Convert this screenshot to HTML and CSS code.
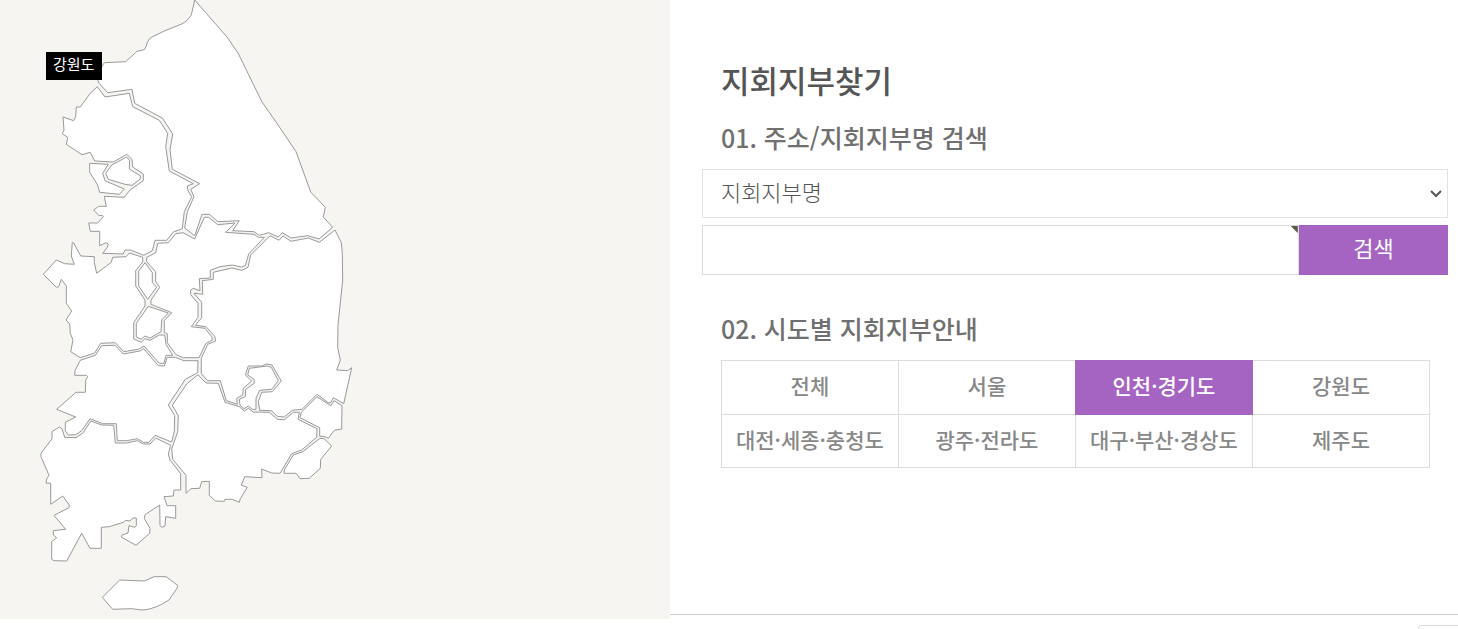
FILE: index.html
```html
<!DOCTYPE html>
<html lang="ko">
<head>
<meta charset="utf-8">
<meta name="viewport" content="width=device-width, initial-scale=1">
<title>지회지부찾기</title>
<link rel="stylesheet" href="styles.css">
</head>
<body>
<main class="page">
  <section class="map-panel" aria-label="지도">
    <svg class="map" viewBox="0 0 360 619" width="360" height="619" role="img" aria-label="대한민국 지도">
      <!-- 강원도 -->
      <path d="M194.7 0L227 37L238 53L262 102L274.7 120L296 151.7L310.7 192L325.3 207.3L323.3 217L332.7 227.3L319 239L307.7 235.7L291 238L282.3 232.7L278.3 237L268.7 232.7L259.3 235.3L254 231.7L232.7 230.7L239.3 220.7L218 221.7L209.3 214.3H202L194.7 235.7L184.7 228L187.3 211.7L194 196.7L190.7 189.3L199.7 183.7L172.3 169.3L170 150L172.7 134L162.3 118L134.7 103.3L132 89.3L107.7 92.7L99 83.3L97 78L102 66.7L104.3 62.7L125.7 61.7L137 51.3L144.3 49.7Q147 46 147 43Q149 38 152 37L165 30.7L181.7 24Q191 19 192 12Z"/>
      <!-- 경기도 -->
      <path d="M97.3 86.7L105 97L129.3 93.3L132.7 106.7L159.3 120.3L167.7 133.3L165.7 146.7L169.3 171L193.3 183.7L187.3 186L188 190.7L191.7 196.7L184.3 211.7L182.3 228.7L173.3 232L166.7 240.3H155L152.3 250.7L143.7 255.3L130.7 250H125L123.3 254L102.7 253.3L107.3 247.3L108.3 244L106 242.7L99.7 245.7V231.3H90.3L88.7 223H97.7L103.3 216.7L102.3 215.3L99 215.7L93.7 210L98.7 206.3H106.3L104.3 196.3L124.3 197.3L130 190L143.3 180.7V174L132.7 167L132 159.3L126.7 154.3L113.3 162L94.7 161L90.3 152.3L82 154.7L66.3 144.3L67.7 137.3L62.3 133.7L64 130L63 117L73.7 120.7L75.7 116.7L76.3 107H80.3L90.7 92.7Z"/>
      <!-- 인천 -->
      <path d="M89.7 163.3L108.3 164.3L102.7 173.3L105 180.7L124.3 189L119.3 194.3L99.7 192.3L97.3 184.3L89.7 172.3Z"/>
      <!-- 서울 -->
      <path d="M126.7 157L129.7 160.7L129.3 169L140.7 176L140 179.3L132 185.3L125 184.3L108.3 179.3L105.7 173.3L111.7 165Z"/>
      <!-- 충청남도 -->
      <path d="M72.3 242.3L73.7 243L80.7 256L94.3 256.7V262.7L96.7 273.3L111.3 262.3L112.7 257.3L126 256.7L129.3 253L142.7 257.3V262L135.7 270.7V286L145 300V306L133.7 322.7V339L141.3 342.3L145 338.7L150 340.3L159.3 335H164.7L166 344.3L172.7 355.3H166L164 363.3H159.3L144 346L138.3 349.3L123.7 351.7L115.3 342.7L100.7 343.3L94.7 353L80.3 357.7L70.7 351.7L73 340L70.3 333.3L69.7 324L66 320L71.7 311L66.3 303.3V286L61.3 279.3L58.7 286.7L56.3 287.3L43.3 274.3L56.3 260L64.7 263.7L74.3 264.3L71.3 256Z"/>
      <!-- 세종 -->
      <path d="M145 262.7L152.3 272.7V282.7L156.7 287L147.7 299.3L138.7 286V271Z"/>
      <!-- 대전 -->
      <path d="M148.3 306.3L168.3 313L161.7 320L161 331.7L150 338L145 336L141 339.3L136.3 337V323.3Z"/>
      <!-- 충청북도 -->
      <path d="M194.7 239L204.3 217.3H208.7L217.7 224.7L235 223L225.7 232.3L254 234.3L258.3 237.3H264.3L248.7 254L245.3 265.7L241.3 267L232.3 265L220 266.7L210.3 270.3V278L199.3 278.7L200 290.7L193.3 288.3L190.7 290V294.7L198 303.3V317.3L191.3 326.7L205 328.3L211.7 336.7L212.3 340L205.7 343.7L199 357.7H183.3L176 354.7L167.3 342.7V333.7L164.3 332.3V320.7L171.7 312.7L151 304.3V300L159.7 287.3L155.7 281.7V271.7L146.7 261.7V257.3L155.7 252.7L157.7 243.3L168.3 242.7L175.7 233.7L183 232.7Z"/>
      <!-- 경상북도 -->
      <path d="M335 230L341.3 242.7L342.3 253.3L342.7 280L338 325L337.7 347.3L340.3 360L336.7 370L347.7 370.7L351.7 367.7L343.7 403.7L333.3 397.7L330.7 402.7H328.3L317 394.3L302 409.3L292.3 410.3L284.3 417L277.3 416.3L271.3 410.7L259.7 410.3L258.3 401.7L261.7 392.3L272.3 391.7L281.3 381L272 365L266.7 364L261.7 366H248.3L245.3 375L251.7 381L243.3 388.3L242.7 395L236.7 398.3L237.3 404.3L226.3 400.7L220.3 380.7H207.3L201.3 373.3V358.3L207.7 344.3L215.7 341L214.7 336.3L206 326.7L195.3 325.3L201.7 317.7V302.3L194 293.3L202.7 294.3L202.3 280.7L213.3 279.3V272.3L231.7 268L241.7 270.3L248 267.3L250.7 255L270 235.7L279 240.3L283 236L291 241.3L308.3 238L319.3 242.3Z"/>
      <!-- 대구 -->
      <path d="M249.3 368.3L267.3 366L271.3 367.3L278.3 380.7L271.7 389.3L259.7 390.3L256 398.3V409.3H252.3L248.3 406L244 408.7L240 405.3L239.3 399.3L245.3 396.7L245.7 389.3L254.3 383.3L254 379.3L247.7 375Z"/>
      <!-- 울산 -->
      <path d="M317 396.7L330.7 405.7L334 400.7L342 405.7L341.7 429L334.3 430.3L328.3 438.3L324 436.3H319.7V427.7L300 417.7L301.3 412.3Z"/>
      <!-- 부산 -->
      <path d="M320 438.3L324 438.7L331.7 446L320.7 459.3L320.3 468.3L309.3 478.3L300 478.7L296 473.3H284L284.3 470L293.3 455L302.7 451.7Z"/>
      <!-- 경상남도 -->
      <path d="M198.3 375L206 383L218.3 383.3L225 402.3L239.3 406.7L244.3 411L248.3 408.3L253.3 412L269.3 412.3L277.3 419.3L284.3 419.7L293.3 412.3H299.3L298 419.3L317 428.7L316.7 437.3L301.7 450L291.7 453.7L280 473.3L271.7 473L261.7 469L262 477.7L244.7 476.7L241.3 485.3L247.3 487.3L240.3 498.7L239.3 502.3L232.3 499.3H225L224.3 501.3L215.3 501L209.3 495.3V481.3L201.7 481.7L199.7 488.3L191 488.7L186 493.3V475.3L172.7 459.3L171.7 449L177.7 431.7L178.3 415.7L172.3 405.3L186.7 384L196.7 375.7Z"/>
      <!-- 전라북도 -->
      <path d="M80.3 360.3L95.3 355.3L101.7 345.7L115 345.3L123.3 354L140 351L143.7 348.7L158.3 365.7L164.3 366L167.3 357.3H175.3L184 360.7H198L197.7 372.7L185.3 379.3L168.3 405L174.7 415.7L174.3 431.7L171.7 442L155 435.3L149 442.3H143.3L137.3 438.7L126.7 440.7H117.3L116.3 423.7H102.7L90 418.7L81.7 430.7L75.7 434.7L68.3 435L65.3 430.7V422.3L75.7 417L56.7 409.3L76 392.3H85.3L85.7 380L87.7 376.7L86.3 375.3H74.7L75 370.7Z"/>
      <!-- 전라남도 -->
      <path d="M52 431.7L59.3 427L62 428.7L64.7 437.3L76 437.7L83.3 432.7L90.7 421L101.7 425L113.7 425.3L115.3 443H126.3L137.3 440.7L143.3 444H150L155.7 438L170.7 445.3L168.3 454L170 460L180.7 473.7V490H174L173.3 496L164 496.7L167 505.7H175.7V518.3L165.7 516.7L165 526L162 527.3L160 525.7L159.7 505L145 514.7L144.3 518.7L150 528.3L149.7 533.3L136 545.3L121.3 537L122 535L128 533L129 525.7L135 527.3L136.3 525.7V518H132.7L130 521L125.7 520.3L123.3 522.3L109.3 526.7L101.3 527.3V548.3H90L81.7 533.3L66.7 561L54 560.7L51.7 559.3V541.7L56.7 537.7L53.3 535V530.7L65.7 529.3L54 515.3L69 507.7L69.3 505L62.7 496L50.7 504.3V483.3L46 483L46.7 479L49 475.3L41 456.7V453.3L52 438.7Z"/>
      <!-- 제주도 -->
      <path d="M102.3 597.3L119.7 580L144.3 581L154 576.7H166L177.7 585.3L177 588.3L169 600L161.7 604.3Q150 610 142 610L131.7 608.7L112.7 609.3Z"/>
    </svg>
    <span class="map-tip">강원도</span>
  </section>

  <div class="side">
    <section class="finder">
      <h2 class="title">지회지부찾기</h2>
      <h3 class="subtitle"><label for="field">01. 주소/지회지부명 검색</label></h3>
      <form class="search" onsubmit="return false">
        <div class="select-wrap">
          <select class="select" id="field">
            <option>지회지부명</option>
            <option>주소</option>
          </select>
          <svg class="chevron" viewBox="0 0 12 8" width="12" height="8" aria-hidden="true"><path d="M1 1L6 6L11 1"/></svg>
        </div>
        <div class="search-row">
          <div class="input-wrap">
            <input class="input" type="text" aria-label="검색어">
            <span class="corner"></span>
          </div>
          <button class="search-button" type="submit">검색</button>
        </div>
      </form>
      <h3 class="subtitle">02. 시도별 지회지부안내</h3>
      <nav class="regions" aria-label="시도별">
        <a class="region" href="#all">전체</a>
        <a class="region" href="#seoul">서울</a>
        <a class="region region-active" href="#gyeonggi">인천·경기도</a>
        <a class="region" href="#gangwon">강원도</a>
        <a class="region" href="#chungcheong">대전·세종·충청도</a>
        <a class="region" href="#jeolla">광주·전라도</a>
        <a class="region" href="#gyeongsang">대구·부산·경상도</a>
        <a class="region" href="#jeju">제주도</a>
      </nav>
    </section>
    <button class="more" type="button" aria-label="더보기"></button>
  </div>
</main>
</body>
</html>
```
FILE: styles.css
```css
* {
  box-sizing: border-box;
}

body {
  margin: 0;
  background: #fff;
  color: #666;
  font-family: "Noto Sans CJK KR", sans-serif;
}

.page {
  display: flex;
  align-items: flex-start;
  height: 100vh;
  overflow: hidden;
}

.map-panel {
  position: relative;
  flex: 85 1 0;
  background: #f6f5f1;
}

.map {
  display: block;
  fill: #fff;
  stroke: #999;
  stroke-width: 1;
}

.map-tip {
  position: absolute;
  left: 46px;
  top: 52px;
  padding: 0 8px 4px 7px;
  background: #000;
  color: #fff;
  font-size: 15px;
  line-height: 24px;
}

.side {
  flex: 100 1 0;
  display: flex;
  flex-direction: column;
}

.finder {
  padding: 58px 10px 147px 32px;
  border-bottom: 1px solid #ccc;
}

.title,
.subtitle {
  margin: 0;
  padding-left: 19px;
  font-weight: 500;
}

.title {
  color: #555;
  font-size: 31px;
  line-height: 44px;
}

.subtitle {
  margin: 15px 0 12px;
  color: #707070;
  font-size: 25px;
  line-height: 40px;
}

.search {
  display: flex;
  flex-direction: column;
  gap: 7px;
  margin-bottom: 33px;
}

.select-wrap,
.input-wrap {
  position: relative;
}

.select,
.input {
  display: block;
  width: 100%;
  border: 1px solid #ddd;
  border-radius: 0;
  background: #fff;
  color: #555;
  font-family: inherit;
  font-size: 22px;
  font-weight: 300;
}

.select {
  height: 49px;
  padding: 0 18px 6px;
  border-color: #e3e3e3;
  appearance: none;
}

.chevron {
  position: absolute;
  right: 6px;
  top: 21px;
  fill: none;
  stroke: #555;
  stroke-width: 2;
  pointer-events: none;
}

.search-row {
  display: flex;
}

.input-wrap {
  flex: 1;
}

.input {
  height: 50px;
  padding: 0 18px;
}

.corner {
  position: absolute;
  right: 1px;
  top: 1px;
  width: 7px;
  height: 7px;
  background: #565c47;
  clip-path: polygon(0 0, 100% 0, 100% 100%);
}

.search-button {
  flex: 0 0 20%;
  padding: 0 0 6px;
  border: 0;
  background: #a564c2;
  color: #fff;
  font-family: inherit;
  font-size: 22px;
}

.regions {
  display: grid;
  grid-template-columns: repeat(4, 1fr);
  grid-auto-rows: 54px 53px;
  margin: 0 19px;
}

.region {
  display: flex;
  align-items: center;
  justify-content: center;
  margin: 0 -1px -1px 0;
  padding-bottom: 5px;
  border: 1px solid #ddd;
  color: #888;
  font-size: 21px;
  font-weight: 500;
  text-decoration: none;
  white-space: nowrap;
}

.region-active {
  z-index: 1;
  border-color: #a564c2;
  background: #a564c2;
  color: #fff;
}

.more {
  align-self: flex-end;
  width: 40px;
  height: 40px;
  margin-top: 10px;
  padding: 0;
  border: 1px solid #ddd;
  border-right: 0;
  border-radius: 4px 0 0 0;
  background: #fff;
}
```
